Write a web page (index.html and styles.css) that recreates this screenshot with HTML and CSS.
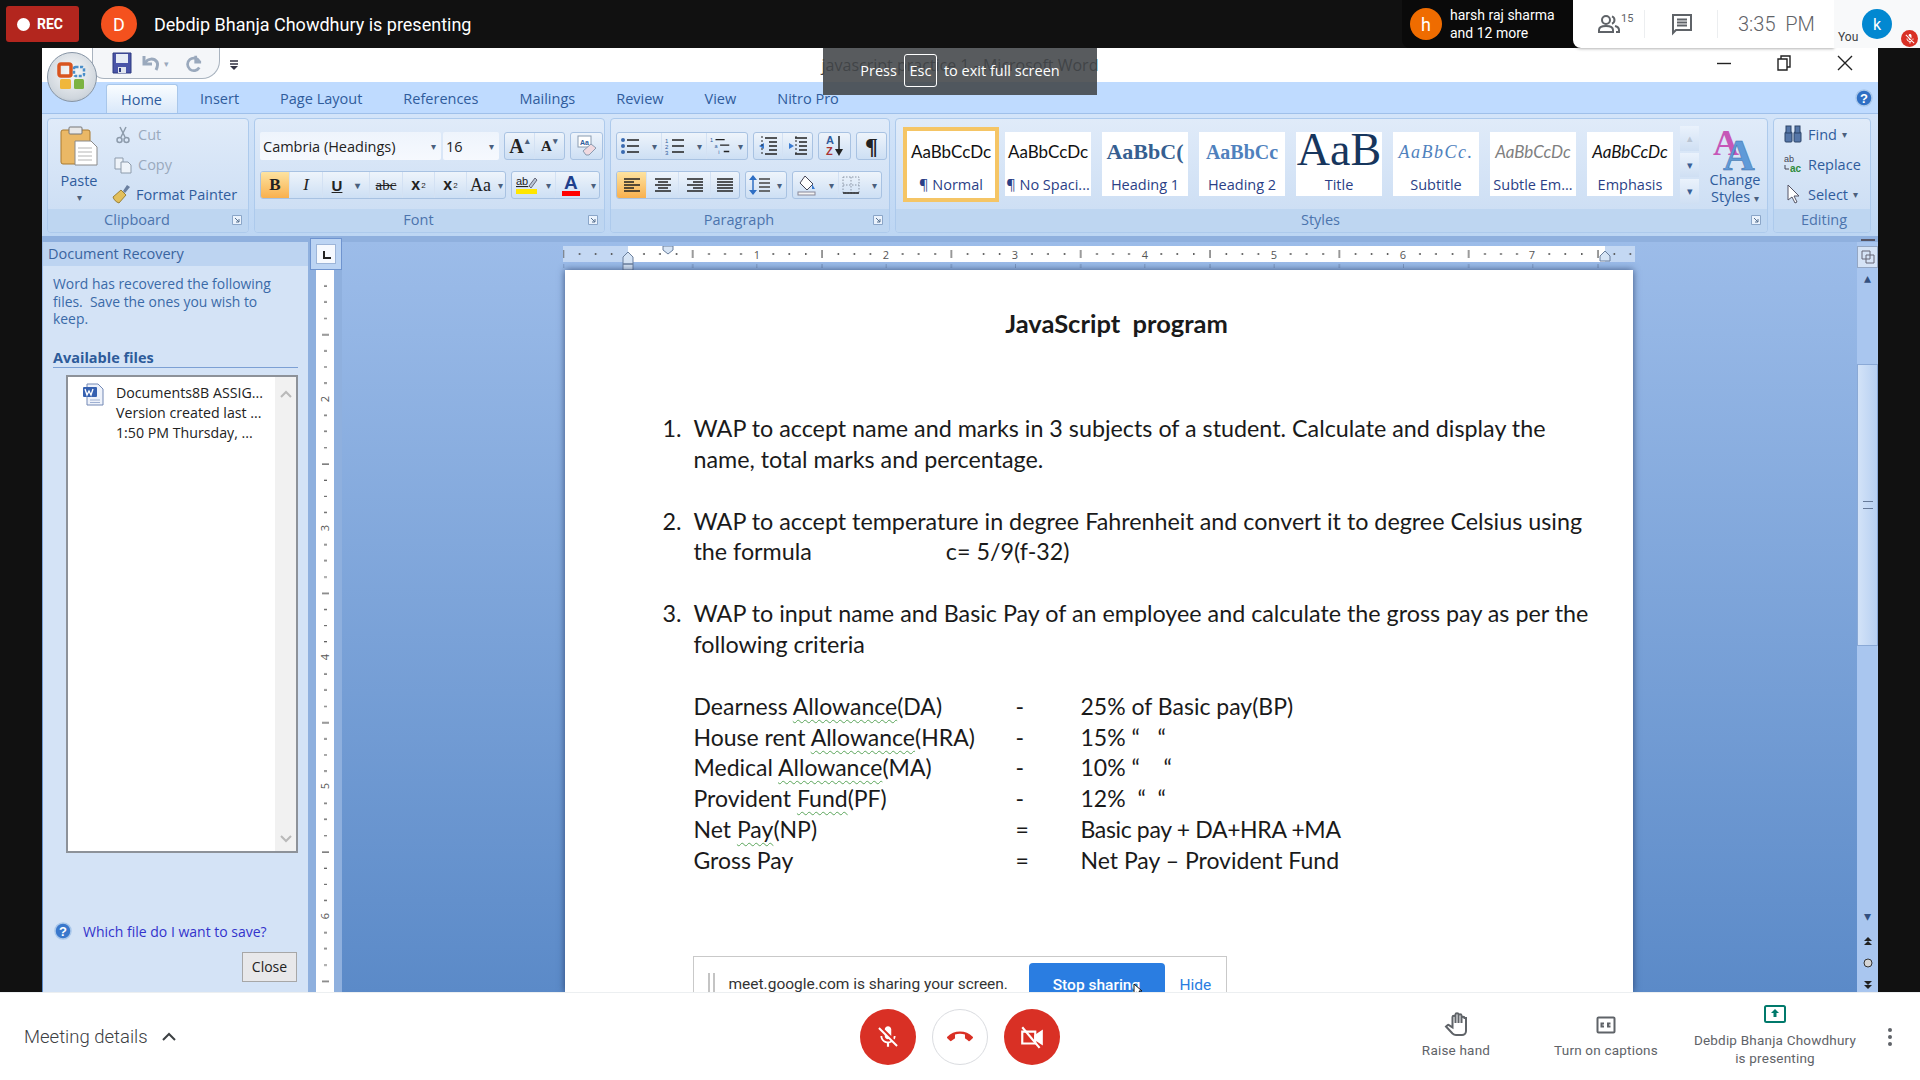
FILE: index.html
```html
<!DOCTYPE html>
<html lang="en">
<head>
    <meta charset="UTF-8">
    <title>Meet - Debdip Bhanja Chowdhury is presenting</title>
    <link rel="stylesheet" href="styles.css">
</head>
<body>
    <svg class="defs" width="0" height="0">
        <symbol id="i-launcher" viewBox="0 0 10 10"><path d="M.5.5h9v9h-9z" fill="#eaf2fc" stroke="#8ba6c8"/><path d="M3 3l4 4M7 4v3H4" fill="none" stroke="#56708f"/></symbol>
        <symbol id="i-left" viewBox="0 0 18 16"><path d="M1 2h16M1 5h10M1 8h16M1 11h10M1 14h16" stroke="#222" stroke-width="1.3"/></symbol>
        <symbol id="i-center" viewBox="0 0 18 16"><path d="M1 2h16M4 5h10M1 8h16M4 11h10M1 14h16" stroke="#222" stroke-width="1.3"/></symbol>
        <symbol id="i-right" viewBox="0 0 18 16"><path d="M1 2h16M7 5h10M1 8h16M7 11h10M1 14h16" stroke="#222" stroke-width="1.3"/></symbol>
        <symbol id="i-justify" viewBox="0 0 18 16"><path d="M1 2h16M1 5h16M1 8h16M1 11h16M1 14h16" stroke="#222" stroke-width="1.3"/></symbol>
    </svg>

    <header class="topbar">
        <div class="rec"><span class="rec-dot"></span>REC</div>
        <div class="avatar avatar-d">D</div>
        <div class="presenter">Debdip Bhanja Chowdhury is presenting</div>
        <div class="spacer"></div>
        <div class="people-chip">
            <div class="avatar avatar-h">h</div>
            <div class="people-names">harsh raj sharma<br>and 12 more</div>
        </div>
        <div class="meet-panel">
            <div class="panel-cell panel-people">
                <svg width="24" height="24" viewBox="0 0 24 24" fill="none" stroke="#5f6368" stroke-width="2"><circle cx="9" cy="8" r="4"/><path d="M2 20v-2c0-3 4-4 7-4s7 1 7 4v2z"/><path d="M15 4.3a4 4 0 0 1 0 7.4M18 14c2 .5 4 1.6 4 4v2h-3"/></svg>
                <sup class="people-count">15</sup>
            </div>
            <div class="panel-cell panel-chat">
                <svg width="22" height="24" viewBox="0 0 22 24" fill="none" stroke="#5f6368" stroke-width="2"><path d="M2 3h18v15H5l-3 3z"/><path d="M6 7.5h10M6 10.5h10M6 13.5h10"/></svg>
            </div>
            <div class="panel-time">3:35&nbsp; PM</div>
        </div>
        <div class="self-tile">
            <span class="self-you">You</span>
            <div class="avatar avatar-k">k</div>
            <span class="self-mic">
                <svg width="12" height="12" viewBox="0 0 24 24" fill="#fff"><path d="M19 11h-1.7c0 .74-.16 1.43-.43 2.05l1.23 1.23c.56-.98.9-2.09.9-3.28zM15 11.17V5c0-1.66-1.34-3-3-3S9 3.34 9 5v.18zM4.27 3L3 4.27l6 6V11c0 1.66 1.33 3 3 3 .22 0 .44-.03.65-.08l1.66 1.66c-.71.33-1.5.52-2.31.52-2.76 0-5.3-2.1-5.3-5.1H5c0 3.41 2.72 6.23 6 6.72V21h2v-3.28c.91-.13 1.77-.45 2.54-.9L19.73 21 21 19.73z"/></svg>
            </span>
        </div>
    </header>

    <main class="word">
        <!-- office button sits over title bar and tabs -->
        <div class="orb">
            <svg width="30" height="30" viewBox="0 0 30 30">
                <rect x="2" y="2" width="12" height="12" rx="2" fill="none" stroke="#d9541e" stroke-width="3.5"/>
                <rect x="17" y="5" width="10" height="9" rx="1.5" fill="none" stroke="#4a8ec9" stroke-width="2.5" stroke-dasharray="3 1.5"/>
                <rect x="3" y="17" width="11" height="10" rx="1.5" fill="#f0b73c"/>
                <rect x="17" y="17" width="10" height="10" rx="1.5" fill="#7cb342"/>
            </svg>
        </div>

        <div class="titlebar">
            <div class="qat">
                <div class="qat-pill">
                    <svg width="20" height="22" viewBox="0 0 20 22"><path d="M1 1h18v20H1z" fill="#4a55a8" stroke="#2c3a80"/><path d="M4 2h12v9H4z" fill="#e6ecf6"/><path d="M6 15h8v6H6z" fill="#dfe4ee"/><path d="M7 16h2v4H7z" fill="#2c3a80"/></svg>
                    <svg width="20" height="20" viewBox="0 0 20 20" fill="none" stroke="#9aa9bd" stroke-width="3"><path d="M3 3v8h8"/><path d="M4 10c3-5 9-5 12-1 1 2 1 4-1 8"/></svg>
                    <span class="qat-drop">&#9662;</span>
                    <svg class="qat-redo" width="18" height="20" viewBox="0 0 20 20" fill="none" stroke="#9aa9bd" stroke-width="3"><path d="M13 2v7h6"/><path d="M17 8a7 7 0 1 0 0 7"/></svg>
                </div>
                <svg class="qat-more" width="8" height="12" viewBox="0 0 8 12"><path d="M0 2h8M0 5h8" stroke="#334" stroke-width="1.4"/><path d="M0 7h8l-4 4z" fill="#334"/></svg>
            </div>
            <div class="doc-title">javascript practice 1 - Microsoft Word</div>
            <div class="win-controls">
                <svg width="14" height="14" viewBox="0 0 14 14"><path d="M0 7.5h14" stroke="#222" stroke-width="1.4"/></svg>
                <svg width="14" height="16" viewBox="0 0 14 16" fill="none" stroke="#222" stroke-width="1.4"><path d="M1 4h9v11H1z"/><path d="M4 4V1h9v11h-3"/></svg>
                <svg width="16" height="16" viewBox="0 0 16 16"><path d="M1 1l14 14M15 1L1 15" stroke="#222" stroke-width="1.4"/></svg>
            </div>
        </div>

        <nav class="tabs">
            <div class="tab tab-active">Home</div>
            <div class="tab">Insert</div>
            <div class="tab">Page Layout</div>
            <div class="tab">References</div>
            <div class="tab">Mailings</div>
            <div class="tab">Review</div>
            <div class="tab">View</div>
            <div class="tab">Nitro Pro</div>
            <div class="spacer"></div>
            <svg class="help-icon" width="18" height="18" viewBox="0 0 18 18"><circle cx="9" cy="9" r="8" fill="#2f6fc4" stroke="#a9c7ea" stroke-width="1.5"/><text x="9" y="13.5" text-anchor="middle" class="help-q">?</text></svg>
        </nav>

        <section class="ribbon">
            <div class="group group-clipboard">
                <div class="group-body clipboard-body">
                    <div class="paste">
                        <svg width="38" height="40" viewBox="0 0 38 40"><rect x="1" y="4" width="29" height="34" rx="2" fill="#eab866" stroke="#a97a30"/><rect x="9" y="1" width="13" height="7" rx="1" fill="#e8e8e8" stroke="#777"/><path d="M15 15h16l6 6v18H15z" fill="#fff" stroke="#8a8a8a"/><path d="M18 22h14M18 26h14M18 30h14M18 34h14" stroke="#b5b5b5"/></svg>
                        <span class="paste-label">Paste</span>
                        <span class="drop">&#9662;</span>
                    </div>
                    <div class="clip-list">
                        <div class="clip-item is-off">
                            <svg width="20" height="20" viewBox="0 0 20 20" fill="none" stroke="#8d9bab" stroke-width="1.5"><path d="M7 2l5 10M13 2L8 12"/><circle cx="6.5" cy="15" r="2.5"/><circle cx="13.5" cy="15" r="2.5"/></svg>
                            Cut
                        </div>
                        <div class="clip-item is-off">
                            <svg width="20" height="20" viewBox="0 0 20 20" fill="#eef3f9" stroke="#8d9bab"><path d="M2 3h8v11H2z"/><path d="M8 7h7l3 3v8H8z"/></svg>
                            Copy
                        </div>
                        <div class="clip-item">
                            <svg width="20" height="20" viewBox="0 0 20 20"><path d="M12 7l4-6 3 2-5 6z" fill="#6a7fa0"/><path d="M2 13l8-7 5 5-7 8c-3-1-5-3-6-6z" fill="#e2bf5b" stroke="#8a6d1e" stroke-width=".8"/></svg>
                            Format Painter
                        </div>
                    </div>
                </div>
                <div class="group-label">Clipboard<svg class="launcher" width="10" height="10"><use href="#i-launcher"/></svg></div>
            </div>

            <div class="group group-font">
                <div class="group-body font-body">
                    <div class="tool-row">
                        <div class="combo combo-font"><span>Cambria (Headings)</span><span class="drop">&#9662;</span></div>
                        <div class="combo combo-size"><span>16</span><span class="drop">&#9662;</span></div>
                        <div class="btn-group grow-group">
                            <div class="btn w-30 glyph-a-big">A<sup>&#9652;</sup></div>
                            <div class="btn w-29 glyph-a-small">A<sup>&#9662;</sup></div>
                        </div>
                        <div class="btn-group clear-group">
                            <div class="btn w-31">
                                <svg width="22" height="22" viewBox="0 0 22 22"><rect x="2" y="1" width="13" height="11" fill="#fff" stroke="#8a9bb0"/><text x="8.5" y="9.5" text-anchor="middle" class="clear-aa">Aa</text><path d="M7 16l8-7 5 4-7 7H10z" fill="#f0d9e0" stroke="#8a9bb0"/></svg>
                            </div>
                        </div>
                    </div>
                    <div class="tool-row">
                        <div class="btn-group format-group">
                            <div class="btn is-on w-29 glyph-b">B</div>
                            <div class="btn w-33 glyph-i">I</div>
                            <div class="btn w-47 glyph-u"><u>U</u><span class="drop drop-gap">&#9662;</span></div>
                            <div class="btn w-33 glyph-s"><s>abc</s></div>
                            <div class="btn w-32 glyph-x">x<sub>2</sub></div>
                            <div class="btn w-32 glyph-x">x<sup>2</sup></div>
                            <div class="btn w-40 split glyph-aa">Aa<span class="drop">&#9662;</span></div>
                        </div>
                        <div class="btn-group color-group">
                            <div class="btn w-44 split">
                                <svg width="24" height="22" viewBox="0 0 24 22"><text x="1" y="11" class="mark-ab">ab</text><path d="M14 12l6-8 2 2-6 8z" fill="#b9c6d8" stroke="#667"/><rect x="1" y="15" width="21" height="5" fill="#ffe600"/></svg>
                                <span class="drop">&#9662;</span>
                            </div>
                            <div class="btn w-44 split font-color"><span class="font-color-a">A</span><span class="drop">&#9662;</span></div>
                        </div>
                    </div>
                </div>
                <div class="group-label">Font<svg class="launcher" width="10" height="10"><use href="#i-launcher"/></svg></div>
            </div>

            <div class="group group-para">
                <div class="group-body para-body">
                    <div class="tool-row">
                        <div class="btn-group">
                            <div class="btn w-45 split">
                                <svg width="20" height="18" viewBox="0 0 20 18"><path d="M7 3h12M7 9h12M7 15h12" stroke="#222" stroke-width="1.5"/><circle cx="3" cy="3" r="2" fill="#3a6ab0"/><circle cx="3" cy="9" r="2" fill="#3a6ab0"/><circle cx="3" cy="15" r="2" fill="#3a6ab0"/></svg><span class="drop">&#9662;</span>
                            </div>
                            <div class="btn w-45 split">
                                <svg width="20" height="18" viewBox="0 0 20 18"><path d="M7 3h12M7 9h12M7 15h12" stroke="#222" stroke-width="1.5"/><text x="0" y="6" class="mini-num">1</text><text x="0" y="12" class="mini-num">2</text><text x="0" y="18" class="mini-num">3</text></svg><span class="drop">&#9662;</span>
                            </div>
                            <div class="btn w-40 split">
                                <svg width="22" height="20" viewBox="0 0 24 20"><path d="M6 3h10M11 9h10M15 16h6" stroke="#222" stroke-width="1.5"/><text x="0" y="6" class="mini-num">1</text><text x="5" y="12" class="mini-num">a</text><text x="9" y="19" class="mini-num">i</text></svg><span class="drop">&#9662;</span>
                            </div>
                        </div>
                        <div class="btn-group">
                            <div class="btn w-29"><svg width="22" height="20" viewBox="0 0 22 20"><path d="M8 2h12M12 6h8M12 10h8M12 14h8M8 18h12" stroke="#222" stroke-width="1.5"/><path d="M7 7L2 10l5 3z" fill="#3a7bd0"/><path d="M5 0v20" stroke="#222" stroke-dasharray="2 2"/></svg></div>
                            <div class="btn w-29"><svg width="22" height="20" viewBox="0 0 22 20"><path d="M8 2h12M12 6h8M12 10h8M12 14h8M8 18h12" stroke="#222" stroke-width="1.5"/><path d="M2 7l5 3-5 3z" fill="#3a7bd0"/><path d="M9 0v20" stroke="#222" stroke-dasharray="2 2"/></svg></div>
                        </div>
                        <div class="btn-group">
                            <div class="btn w-29 sort-btn">
                                <span class="sort-az"><b class="sort-a">A</b><b class="sort-z">Z</b></span>
                                <svg width="8" height="20" viewBox="0 0 8 20"><path d="M4 0v15" stroke="#222" stroke-width="1.5"/><path d="M0 13h8l-4 7z" fill="#222"/></svg>
                            </div>
                        </div>
                        <div class="btn-group">
                            <div class="btn w-29 pilcrow">&para;</div>
                        </div>
                    </div>
                    <div class="tool-row">
                        <div class="btn-group">
                            <div class="btn is-on w-30"><svg width="18" height="16"><use href="#i-left"/></svg></div>
                            <div class="btn w-32"><svg width="18" height="16"><use href="#i-center"/></svg></div>
                            <div class="btn w-32"><svg width="18" height="16"><use href="#i-right"/></svg></div>
                            <div class="btn w-28"><svg width="18" height="16"><use href="#i-justify"/></svg></div>
                        </div>
                        <div class="btn-group">
                            <div class="btn w-40 split">
                                <svg width="22" height="20" viewBox="0 0 22 20"><path d="M10 4h11M10 8h11M10 12h11M10 16h11" stroke="#444" stroke-width="1.4"/><path d="M4 4v12" stroke="#2f6fc4" stroke-width="1.5"/><path d="M0 5l4-5 4 5zM0 15l4 5 4-5z" fill="#2f6fc4"/></svg><span class="drop">&#9662;</span>
                            </div>
                        </div>
                        <div class="btn-group">
                            <div class="btn w-46 split">
                                <svg width="22" height="22" viewBox="0 0 22 22"><path d="M9 2l8 8-6 6-7-7z" fill="#fff" stroke="#445"/><path d="M16 10l3 5-3 0z" fill="#3a7bd0"/><rect x="2" y="18" width="17" height="3" fill="#f4f4f4" stroke="#889"/></svg><span class="drop">&#9662;</span>
                            </div>
                            <div class="btn w-42 split">
                                <svg width="18" height="18" viewBox="0 0 18 18"><path d="M1 1h16v16H1zM9 1v16M1 9h16" fill="none" stroke="#8a95a5" stroke-dasharray="1.5 1.5"/><path d="M1 17h16" stroke="#222" stroke-width="1.5"/></svg><span class="drop">&#9662;</span>
                            </div>
                        </div>
                    </div>
                </div>
                <div class="group-label">Paragraph<svg class="launcher" width="10" height="10"><use href="#i-launcher"/></svg></div>
            </div>

            <div class="group group-styles">
                <div class="group-body styles-body">
                    <div class="gallery">
                        <div class="style-tile tile-selected"><div class="sample">AaBbCcDc</div><div class="tile-name">&para; Normal</div></div>
                        <div class="style-tile"><div class="sample">AaBbCcDc</div><div class="tile-name">&para; No Spaci...</div></div>
                        <div class="style-tile"><div class="sample sample-h1">AaBbC(</div><div class="tile-name">Heading 1</div></div>
                        <div class="style-tile"><div class="sample sample-h2">AaBbCc</div><div class="tile-name">Heading 2</div></div>
                        <div class="style-tile"><div class="sample sample-title">AaB</div><div class="tile-name">Title</div></div>
                        <div class="style-tile"><div class="sample sample-sub">AaBbCc.</div><div class="tile-name">Subtitle</div></div>
                        <div class="style-tile"><div class="sample sample-subtle">AaBbCcDc</div><div class="tile-name">Subtle Em...</div></div>
                        <div class="style-tile"><div class="sample sample-em">AaBbCcDc</div><div class="tile-name">Emphasis</div></div>
                    </div>
                    <div class="gallery-scroll">
                        <div class="gallery-arrow arrow-off">&#9652;</div>
                        <div class="gallery-arrow">&#9662;</div>
                        <div class="gallery-arrow">&#9662;</div>
                    </div>
                    <div class="change-styles">
                        <svg width="46" height="45" viewBox="0 0 46 45"><text x="1" y="29" class="cs-pink">A</text><text x="11" y="44" class="cs-blue">A</text></svg>
                        <span>Change</span>
                        <span>Styles <i class="drop">&#9662;</i></span>
                    </div>
                </div>
                <div class="group-label">Styles<svg class="launcher" width="10" height="10"><use href="#i-launcher"/></svg></div>
            </div>

            <div class="group group-edit">
                <div class="group-body edit-body">
                    <div class="edit-item">
                        <svg width="20" height="20" viewBox="0 0 20 20" fill="#5576a8" stroke="#2d4468"><rect x="2" y="8" width="7" height="10" rx="1"/><rect x="11" y="8" width="7" height="10" rx="1"/><rect x="3" y="2" width="5" height="7"/><rect x="12" y="2" width="5" height="7"/></svg>
                        Find <i class="drop">&#9662;</i>
                    </div>
                    <div class="edit-item">
                        <svg width="20" height="20" viewBox="0 0 20 20"><text x="1" y="8" class="rep-ab">ab</text><text x="7" y="18" class="rep-ac">ac</text><path d="M2 11v4h4" fill="none" stroke="#445"/></svg>
                        Replace
                    </div>
                    <div class="edit-item">
                        <svg width="20" height="20" viewBox="0 0 20 20"><path d="M5 1v15l4-3 3 6 2-1-3-6h5z" fill="#fff" stroke="#556"/></svg>
                        Select <i class="drop">&#9662;</i>
                    </div>
                </div>
                <div class="group-label label-edit">Editing</div>
            </div>
        </section>

        <section class="workspace">
            <aside class="recovery">
                <div class="recovery-head">Document Recovery</div>
                <div class="recovery-body">
                    <p class="recovery-text">Word has recovered the following<br>files.&nbsp; Save the ones you wish to<br>keep.</p>
                    <div class="recovery-sub">Available files</div>
                    <div class="file-list">
                        <div class="file-item">
                            <svg width="22" height="23" viewBox="0 0 22 23"><path d="M5 1h11l5 5v16H5z" fill="#eef2fa" stroke="#7288b5"/><rect x="1" y="4" width="14" height="10" rx="1" fill="#3560b0"/><path d="M3 6l2 6 2-4 2 4 2-6" fill="none" stroke="#fff" stroke-width="1.3"/><path d="M8 17h10M8 19.5h10" stroke="#9fb0d2"/></svg>
                            <div class="file-lines">
                                <div>Documents8B ASSIG...</div>
                                <div>Version created last ...</div>
                                <div>1:50 PM Thursday, ...</div>
                            </div>
                        </div>
                        <div class="file-scroll">
                            <svg width="12" height="8" viewBox="0 0 12 8" fill="none" stroke="#b9b9b9" stroke-width="2"><path d="M1 7l5-5 5 5"/></svg>
                            <svg width="12" height="8" viewBox="0 0 12 8" fill="none" stroke="#b9b9b9" stroke-width="2"><path d="M1 1l5 5 5-5"/></svg>
                        </div>
                    </div>
                    <div class="recovery-help">
                        <svg width="18" height="18" viewBox="0 0 18 18"><circle cx="9" cy="9" r="8" fill="#3a78cc" stroke="#a9c7ea" stroke-width="1.5"/><text x="9" y="13.5" text-anchor="middle" class="help-q">?</text></svg>
                        <span>Which file do I want to save?</span>
                    </div>
                    <div class="recovery-close"><div class="close-btn">Close</div></div>
                </div>
            </aside>

            <div class="vruler">
                <div class="vruler-corner"><span class="tab-stop"></span></div>
                <svg class="vruler-strip" width="18" height="722" viewBox="0 0 18 722">
                    <defs>
                        <pattern id="vticks" width="18" height="129.33" patternUnits="userSpaceOnUse">
                            <path d="M8 16h3M8 32h3M8 48.5h3M6 64.7h7M8 81h3M8 97h3M8 113h3" stroke="#555" stroke-width="1.2"/>
                        </pattern>
                    </defs>
                    <rect width="18" height="722" fill="#fff"/>
                    <rect width="18" height="722" fill="url(#vticks)"/>
                    <text transform="translate(13,129) rotate(-90)" text-anchor="middle" class="ruler-num">2</text>
                    <text transform="translate(13,258) rotate(-90)" text-anchor="middle" class="ruler-num">3</text>
                    <text transform="translate(13,387) rotate(-90)" text-anchor="middle" class="ruler-num">4</text>
                    <text transform="translate(13,516) rotate(-90)" text-anchor="middle" class="ruler-num">5</text>
                    <text transform="translate(13,646) rotate(-90)" text-anchor="middle" class="ruler-num">6</text>
                </svg>
            </div>

            <div class="doc-area">
                <svg class="hruler" width="1072" height="24" viewBox="0 0 1072 24">
                    <defs>
                        <pattern id="hticks" x="65" width="129.33" height="24" patternUnits="userSpaceOnUse">
                            <path d="M16 7v2M32 7v2M48.5 7v2M81 7v2M97 7v2M113 7v2" stroke="#555" stroke-width="1.5"/>
                            <path d="M64.7 4v8" stroke="#555" stroke-width="1.2"/>
                            <path d="M64.7 18v4M129 18v4" stroke="#7a95bd" stroke-width="1.2"/>
                        </pattern>
                    </defs>
                    <rect width="1072" height="16" fill="#c4d8f3"/>
                    <rect x="65" width="977" height="16" fill="#fff"/>
                    <rect width="1072" height="24" fill="url(#hticks)"/>
                    <text x="194" y="13" text-anchor="middle" class="ruler-num">1</text>
                    <text x="323" y="13" text-anchor="middle" class="ruler-num">2</text>
                    <text x="452" y="13" text-anchor="middle" class="ruler-num">3</text>
                    <text x="582" y="13" text-anchor="middle" class="ruler-num">4</text>
                    <text x="711" y="13" text-anchor="middle" class="ruler-num">5</text>
                    <text x="840" y="13" text-anchor="middle" class="ruler-num">6</text>
                    <text x="969" y="13" text-anchor="middle" class="ruler-num">7</text>
                    <path d="M100 0h10v4l-5 4-5-4z" fill="#d6e4f5" stroke="#6a7f9c"/>
                    <path d="M60 18v-7l5-5 5 5v7zM60 18h10v6H60z" fill="#d6e4f5" stroke="#6a7f9c"/>
                    <path d="M1037 15v-5l5-5 5 5v5z" fill="#d6e4f5" stroke="#6a7f9c"/>
                </svg>

                <article class="page">
                    <h1 class="doc-heading">JavaScript&nbsp; program</h1>
                    <ol class="doc-list">
                        <li>WAP to accept name and marks in 3 subjects of a student. Calculate and display the name, total marks and percentage.</li>
                        <li>WAP to accept temperature in degree Fahrenheit and convert it to degree Celsius using the formula<span class="formula-gap"></span>c= 5/9(f-32)</li>
                        <li>WAP to input name and Basic Pay of an employee and calculate the gross pay as per the following criteria</li>
                    </ol>
                    <div class="pay-table">
                        <div>Dearness <span class="squiggle">Allowance</span>(DA)</div><div>-</div><div>25% of Basic pay(BP)</div>
                        <div>House rent <span class="squiggle">Allowance</span>(HRA)</div><div>-</div><div>15% &#8220;&nbsp; &nbsp;&#8220;</div>
                        <div>Medical <span class="squiggle">Allowance</span>(MA)</div><div>-</div><div>10% &#8220;&nbsp; &nbsp; &#8220;</div>
                        <div>Provident <span class="squiggle">Fund</span>(PF)</div><div>-</div><div>12%&nbsp; &#8220;&nbsp; &#8220;</div>
                        <div>Net <span class="squiggle">Pay</span>(NP)</div><div>=</div><div class="tight">Basic pay + DA+HRA +MA</div>
                        <div>Gross Pay</div><div>=</div><div>Net Pay &ndash; Provident Fund</div>
                    </div>

                    <!-- chrome share notice floats over the page -->
                    <div class="share-bar">
                        <span class="share-grip"></span>
                        <span class="share-text">meet.google.com is sharing your screen.</span>
                        <span class="share-stop">Stop sharing</span>
                        <span class="share-hide">Hide</span>
                        <svg class="share-cursor" width="10" height="14" viewBox="0 0 10 14"><path d="M1 1v10l3-2 2 4 2-1-2-4h3z" fill="#fff" stroke="#111"/></svg>
                    </div>
                </article>
            </div>

            <div class="vscroll">
                <div class="scroll-split"></div>
                <div class="scroll-view">
                    <svg width="16" height="16" viewBox="0 0 16 16" fill="none" stroke="#667"><path d="M2 2h8v8H2zM6 6h8v8H6z"/></svg>
                </div>
                <div class="scroll-arrow">&#9652;</div>
                <div class="scroll-track"><div class="scroll-thumb"><span class="thumb-grip"></span></div></div>
                <div class="scroll-arrow">&#9662;</div>
                <div class="scroll-nav">
                    <svg width="10" height="10" viewBox="0 0 10 10"><path d="M1 5l4-4 4 4zM1 9l4-4 4 4z" fill="#222"/></svg>
                    <svg width="10" height="10" viewBox="0 0 10 10"><circle cx="5" cy="5" r="4" fill="#d5d5d5" stroke="#333"/></svg>
                    <svg width="10" height="10" viewBox="0 0 10 10"><path d="M1 1l4 4 4-4zM1 5l4 4 4-4z" fill="#222"/></svg>
                </div>
            </div>
        </section>

        <div class="esc-toast">Press <span class="esc-key">Esc</span> to exit full screen</div>
    </main>

    <footer class="callbar">
        <div class="call-left">
            <span>Meeting details</span>
            <svg width="16" height="10" viewBox="0 0 16 10" fill="none" stroke="#3c4043" stroke-width="2"><path d="M2 8l6-6 6 6"/></svg>
        </div>
        <div class="call-center">
            <div class="round round-red">
                <svg width="26" height="26" viewBox="0 0 24 24" fill="#fff"><path d="M19 11h-1.7c0 .74-.16 1.43-.43 2.05l1.23 1.23c.56-.98.9-2.09.9-3.28zM15 11.17V5c0-1.66-1.34-3-3-3S9 3.34 9 5v.18zM4.27 3L3 4.27l6 6V11c0 1.66 1.33 3 3 3 .22 0 .44-.03.65-.08l1.66 1.66c-.71.33-1.5.52-2.31.52-2.76 0-5.3-2.1-5.3-5.1H5c0 3.41 2.72 6.23 6 6.72V21h2v-3.28c.91-.13 1.77-.45 2.54-.9L19.73 21 21 19.73z"/></svg>
            </div>
            <div class="round round-white">
                <svg width="26" height="26" viewBox="0 0 24 24" fill="#d93025"><path d="M12 9c-1.6 0-3.15.25-4.6.72v3.1c0 .39-.23.74-.56.9-.98.49-1.87 1.12-2.66 1.85-.18.18-.43.28-.7.28-.28 0-.53-.11-.71-.29L.29 13.08c-.18-.17-.29-.42-.29-.7 0-.28.11-.53.29-.71C3.34 8.78 7.46 7 12 7s8.66 1.78 11.71 4.67c.18.18.29.43.29.71 0 .28-.11.53-.29.71l-2.48 2.48c-.18.18-.43.29-.71.29-.27 0-.52-.11-.7-.28-.79-.74-1.69-1.36-2.67-1.85-.33-.16-.56-.5-.56-.9v-3.1C15.15 9.25 13.6 9 12 9z"/></svg>
            </div>
            <div class="round round-red">
                <svg width="26" height="26" viewBox="0 0 24 24" fill="none" stroke="#fff" stroke-width="2"><path d="M15 7H3v11h12z"/><path d="M15 11l6-4v11l-6-4z" fill="#fff"/><path d="M3 3l16 19"/></svg>
            </div>
        </div>
        <div class="call-right">
            <div class="call-action action-raise">
                <svg width="24" height="24" viewBox="0 0 24 24" fill="none" stroke="#5f6368" stroke-width="2"><path d="M22 6v13c0 2.5-2 4-4 4h-6c-1.5 0-2.5-.5-3.5-1.5L2 14.5l1.5-1.3c.5-.4 1-.4 1.5 0l3.5 2.3V5c0-1.8 3-1.8 3 0v6-8.500c0-1.8 3-1.8 3 0V11 3.500c0-1.8 3-1.8 3 0V11 6c0-1.8 3-1.8 3 0z"/></svg>
                <span>Raise hand</span>
            </div>
            <div class="call-action action-captions">
                <svg width="20" height="20" viewBox="0 0 20 20" fill="none" stroke="#5f6368" stroke-width="2"><rect x="1.5" y="2.5" width="17" height="15" rx="1"/><path d="M8 8.5H5.5v3H8M14.5 8.5H12v3h2.5"/></svg>
                <span>Turn on captions</span>
            </div>
            <div class="call-action action-present">
                <svg width="22" height="18" viewBox="0 0 22 18"><rect x="1" y="1" width="20" height="16" rx="1.5" fill="none" stroke="#00796b" stroke-width="2"/><path d="M11 4l4 4h-2.5v4h-3V8H7z" fill="#00796b"/></svg>
                <span>Debdip Bhanja Chowdhury is presenting</span>
            </div>
            <div class="call-more"><i></i><i></i><i></i></div>
        </div>
    </footer>
</body>
</html>
```

FILE: styles.css
```css
/* Page shell */
* {
    box-sizing: border-box;
}
body {
    margin: 0;
    width: 1920px;
    height: 1080px;
    overflow: hidden;
    display: flex;
    flex-direction: column;
    background: #111;
    font-family: Roboto, "Liberation Sans", sans-serif;
}
.defs {
    position: absolute;
}
.spacer {
    flex: 1;
}

/* Meet top bar */
.topbar {
    height: 48px;
    display: flex;
    align-items: center;
    background: #111;
    color: #fff;
    padding-left: 6px;
    flex: none;
    position: relative;
    z-index: 3;
}
.rec {
    width: 73px;
    height: 36px;
    background: #b3261e;
    border-radius: 3px;
    display: flex;
    align-items: center;
    padding-left: 11px;
    gap: 7px;
    font-size: 14px;
    font-weight: 700;
}
.rec-dot {
    width: 13px;
    height: 13px;
    border-radius: 50%;
    background: #fff;
}
.avatar {
    border-radius: 50%;
    display: flex;
    align-items: center;
    justify-content: center;
    color: #fff;
}
.avatar-d {
    width: 36px;
    height: 36px;
    margin-left: 22px;
    background: #f4511e;
    font-size: 18px;
}
.presenter {
    margin-left: 17px;
    font-size: 18px;
}
.people-chip {
    width: 172px;
    height: 48px;
    background: #0a0a0a;
    border-bottom-left-radius: 8px;
    display: flex;
    align-items: center;
    padding-left: 8px;
    gap: 8px;
}
.avatar-h {
    width: 32px;
    height: 32px;
    background: #ef6c00;
    font-size: 18px;
}
.people-names {
    font-size: 14px;
    line-height: 18px;
    white-space: nowrap;
}
.meet-panel {
    width: 261px;
    height: 48px;
    background: #fff;
    border-bottom-left-radius: 8px;
    margin-left: -1px;
    display: flex;
    align-items: center;
    color: #5f6368;
    box-shadow: 0 1px 3px rgba(0, 0, 0, 0.3);
}
.panel-cell {
    height: 28px;
    display: flex;
    align-items: center;
    border-right: 1px solid #eceef0;
}
.panel-people {
    width: 72px;
    padding-left: 24px;
}
.people-count {
    font-size: 11px;
    margin: -12px 0 0 0;
}
.panel-chat {
    width: 73px;
    padding-left: 26px;
}
.panel-time {
    margin-left: 20px;
    font-size: 20px;
    font-weight: 300;
    white-space: nowrap;
}
.self-tile {
    width: 86px;
    height: 48px;
    background: #f8f9fa;
    position: relative;
    color: #3c4043;
}
.self-you {
    position: absolute;
    left: 4px;
    top: 30px;
    font-size: 12px;
}
.avatar-k {
    position: absolute;
    left: 28px;
    top: 9px;
    width: 30px;
    height: 30px;
    background: #0288d1;
    font-size: 16px;
}
.self-mic {
    position: absolute;
    left: 67px;
    top: 30px;
    width: 17px;
    height: 17px;
    background: #d93025;
    border-radius: 50%;
    display: flex;
    align-items: center;
    justify-content: center;
}

/* Word window */
.word {
    flex: 1;
    min-height: 0;
    margin: 0 42px;
    display: flex;
    flex-direction: column;
    overflow: hidden;
    position: relative;
    background: #bfdbff;
    font-family: "Open Sans", "Liberation Sans", sans-serif;
    color: #3a64a0;
}
.orb {
    position: absolute;
    left: 5px;
    top: 4px;
    width: 50px;
    height: 50px;
    border-radius: 50%;
    background: radial-gradient(circle at 50% 40%, #fafafa, #cfd6dd 70%, #98a4b1);
    border: 1px solid #8795a5;
    display: flex;
    align-items: center;
    justify-content: center;
    z-index: 2;
}
.titlebar {
    height: 34px;
    flex: none;
    background: #fff;
    display: grid;
    grid-template-columns: 1fr auto 1fr;
    align-items: center;
}
.qat {
    display: flex;
    align-items: center;
    padding-left: 50px;
}
.qat-pill {
    width: 128px;
    height: 31px;
    margin-top: -3px;
    border: 1px solid #a9b3bf;
    border-top: 0;
    border-radius: 0 0 18px 12px;
    display: flex;
    align-items: center;
    padding-left: 19px;
    background: #f4f6f9;
}
.qat-pill svg:nth-child(2) {
    margin-left: 9px;
}
.qat-drop {
    font-size: 9px;
    color: #9aa9bd;
    margin: 0 15px 0 3px;
}
.qat-more {
    margin-left: 10px;
}
.doc-title {
    font-size: 16px;
    color: #444;
}
.win-controls {
    display: flex;
    justify-content: flex-end;
    align-items: center;
    gap: 46px;
    padding-right: 25px;
    margin-top: -4px;
}

/* Tabs */
.tabs {
    height: 31px;
    flex: none;
    display: flex;
    align-items: flex-end;
    padding-left: 64px;
    background: #bfdbff;
    font-size: 14.5px;
    color: #2f5c9c;
}
.tab {
    padding: 0 20px;
    height: 29px;
    line-height: 30px;
    margin-right: 1px;
}
.tab-active {
    padding: 0 14px;
    width: 72px;
    background: linear-gradient(#fafdff, #d9e8fa);
    border: 1px solid #a9c7ea;
    border-bottom: 0;
    border-radius: 3px 3px 0 0;
    margin-right: 2px;
}
.help-icon {
    align-self: center;
    margin-right: 5px;
}
.help-q {
    fill: #fff;
    font: 700 13px "Liberation Sans", sans-serif;
}

/* Ribbon */
.ribbon {
    height: 123px;
    flex: none;
    display: flex;
    gap: 5px;
    padding: 4px 5px 3px;
    background: linear-gradient(#d3e4f9, #bdd6f3);
    border-top: 1px solid #9fc0ea;
}
.group {
    display: flex;
    flex-direction: column;
    border: 1px solid #adcaec;
    border-radius: 4px;
    background: linear-gradient(#e0ebf9, #c9dcf3);
    overflow: hidden;
}
.group-clipboard { width: 202px; }
.group-font { width: 351px; }
.group-para { width: 280px; }
.group-styles { width: 873px; }
.group-edit { width: 98px; }
.group-body {
    flex: 1;
    min-height: 0;
}
.group-label {
    height: 23px;
    flex: none;
    position: relative;
    text-align: center;
    line-height: 22px;
    font-size: 14.5px;
    color: #4c74ad;
    background: #bed6f1;
    padding-right: 22px;
}
.label-edit {
    padding: 0 0 0 4px;
}
.launcher {
    position: absolute;
    right: 6px;
    top: 6px;
}
.drop {
    font-size: 10px;
    font-style: normal;
    color: #4a5f7d;
}

/* Clipboard */
.clipboard-body {
    display: flex;
    padding-left: 11px;
}
.paste {
    width: 40px;
    display: flex;
    flex-direction: column;
    align-items: center;
    padding-top: 7px;
}
.paste-label {
    font-size: 14.5px;
    line-height: 18px;
    margin-top: 6px;
    color: #2f5c9c;
}
.clip-list {
    margin-left: 12px;
    padding-top: 1px;
    display: flex;
    flex-direction: column;
}
.clip-item {
    height: 30px;
    display: flex;
    align-items: center;
    gap: 5px;
    font-size: 14.5px;
    color: #2f5c9c;
    white-space: nowrap;
}
.is-off {
    color: #9aa9bd;
    padding-left: 2px;
}

/* Buttons shared by the font and paragraph groups */
.font-body {
    padding: 13px 0 0 5px;
}
.para-body {
    padding: 13px 0 0 5px;
}
.tool-row {
    height: 28px;
    display: flex;
    gap: 5px;
    margin-bottom: 11px;
    align-items: stretch;
}
.combo {
    background: linear-gradient(#eef4fc, #f6f9fe);
    display: flex;
    align-items: center;
    justify-content: space-between;
    padding: 0 5px 0 3px;
    font-size: 14.5px;
    color: #222;
    border-radius: 2px;
    white-space: nowrap;
}
.combo-font {
    width: 181px;
    margin-right: -3px;
}
.combo-size {
    width: 56px;
}
.btn-group {
    display: flex;
    border: 1px solid #a8c2e2;
    border-radius: 3px;
    background: linear-gradient(#eef4fb, #cddff4);
    overflow: hidden;
}
.format-group {
    width: 246px;
}
.color-group {
    width: 89px;
}
.btn {
    display: flex;
    align-items: center;
    justify-content: center;
    gap: 1px;
    border-right: 1px solid #d3e1f3;
    color: #222;
    flex: none;
}
.btn:last-child {
    border-right: 0;
}
.split {
    justify-content: space-between;
    padding: 0 4px 0 3px;
}
.is-on {
    background: linear-gradient(#fde3a0, #f9b04e);
}
.w-28 { width: 28px; }
.w-29 { width: 29px; }
.w-30 { width: 30px; }
.w-31 { width: 31px; }
.w-32 { width: 32px; }
.w-33 { width: 33px; }
.w-40 { width: 40px; }
.w-42 { width: 42px; }
.w-44 { width: 44px; }
.w-45 { width: 45px; }
.w-46 { width: 46px; }
.w-47 { width: 47px; }
.glyph-a-big,
.glyph-a-small,
.glyph-b,
.glyph-i,
.glyph-s,
.glyph-aa,
.pilcrow {
    font-family: "Liberation Serif", serif;
}
.glyph-a-big {
    font-size: 20px;
    font-weight: 700;
}
.glyph-a-small {
    font-size: 15px;
    font-weight: 700;
}
.glyph-a-big sup,
.glyph-a-small sup {
    font-size: 9px;
    color: #4a5f7d;
    margin-top: -10px;
}
.glyph-b {
    font-size: 17px;
    font-weight: 700;
}
.glyph-i {
    font-size: 17px;
    font-style: italic;
}
.glyph-u {
    font-size: 15px;
    font-weight: 700;
    font-family: "Liberation Sans", sans-serif;
}
.drop-gap {
    margin-left: 12px;
}
.glyph-s {
    font-size: 15px;
}
.glyph-x {
    font-size: 16px;
    font-weight: 700;
    font-family: "Liberation Sans", sans-serif;
}
.glyph-x sub,
.glyph-x sup {
    font-size: 8px;
    font-weight: 400;
}
.glyph-aa {
    font-size: 18px;
}
.clear-aa {
    font: 700 7px "Liberation Sans", sans-serif;
    fill: #2f5c9c;
}
.mark-ab {
    font: 11px "Liberation Sans", sans-serif;
    fill: #222;
    text-decoration: underline;
}
.font-color-a {
    font: 700 19px/17px "Liberation Sans", sans-serif;
    color: #1f3f8c;
    border-bottom: 5px solid #ff0000;
    margin-left: 3px;
    padding: 0 2px;
}
.mini-num {
    font: 6px "Liberation Sans", sans-serif;
    fill: #2f5c9c;
}
.sort-btn {
    width: 31px;
}
.sort-az {
    display: flex;
    flex-direction: column;
    font: 700 11px/11px "Liberation Sans", sans-serif;
}
.sort-a { color: #2f5c9c; }
.sort-z { color: #a33; }
.pilcrow {
    font-size: 24px;
    font-weight: 700;
}

/* Styles gallery */
.styles-body {
    display: flex;
    padding: 7px 0 0 7px;
}
.gallery {
    width: 777px;
    height: 76px;
    display: flex;
    gap: 11px;
    align-items: center;
}
.style-tile {
    width: 86px;
    height: 64px;
    flex: none;
    background: #fff;
    display: flex;
    flex-direction: column;
    overflow: hidden;
}
.tile-selected {
    width: 96px;
    height: 75px;
    margin-right: -5px;
    border: 4px solid #f5c565;
    box-shadow: inset 0 0 0 1px #fff;
}
.sample {
    height: 43px;
    text-align: center;
    font: 17px/40px Lato, "Liberation Sans", sans-serif;
    color: #111;
    white-space: nowrap;
    overflow: hidden;
}
.tile-selected .sample {
    height: 44px;
    line-height: 42px;
}
.sample-h1 {
    font: 700 22px/40px "Liberation Serif", serif;
    color: #365f91;
}
.sample-h2 {
    font: 700 20px/40px "Liberation Serif", serif;
    color: #4f81bd;
}
.sample-title {
    font: 46px/36px "Liberation Serif", serif;
    color: #17365d;
}
.sample-sub {
    font: italic 18px/40px "Liberation Serif", serif;
    color: #4f81bd;
    letter-spacing: 1.5px;
}
.sample-subtle {
    font: italic 17px/40px Lato, sans-serif;
    color: #808080;
}
.sample-em {
    font: italic 17px/40px Lato, sans-serif;
    color: #111;
}
.tile-name {
    text-align: center;
    font-size: 14.5px;
    line-height: 20px;
    color: #2b3f86;
    white-space: nowrap;
}
.gallery-scroll {
    width: 19px;
    height: 78px;
    display: flex;
    flex-direction: column;
    gap: 2px;
}
.gallery-arrow {
    flex: 1;
    text-align: center;
    font-size: 11px;
    line-height: 24px;
    color: #3a5f95;
    background: linear-gradient(#eaf2fc, #cfdff3);
}
.arrow-off {
    color: #b9c4d2;
}
.change-styles {
    width: 62px;
    margin-left: 5px;
    display: flex;
    flex-direction: column;
    align-items: center;
    font-size: 14.5px;
    line-height: 17px;
    color: #2f5c9c;
    white-space: nowrap;
}
.cs-pink {
    font: 700 36px "Liberation Serif", serif;
    fill: #c657b7;
}
.cs-blue {
    font: 700 44px "Liberation Serif", serif;
    fill: #5f9ad8;
    stroke: #3c6fa8;
    stroke-width: .5;
}

/* Editing */
.edit-body {
    padding: 0 0 0 9px;
}
.edit-item {
    height: 30px;
    display: flex;
    align-items: center;
    gap: 5px;
    font-size: 14.5px;
    color: #2f5c9c;
    white-space: nowrap;
}
.rep-ab {
    font: 9px "Liberation Sans", sans-serif;
    fill: #445;
}
.rep-ac {
    font: 700 10px "Liberation Sans", sans-serif;
    fill: #2e8b3a;
}

/* Work area under the ribbon */
.workspace {
    flex: 1;
    min-height: 0;
    display: flex;
    background: linear-gradient(#9cbce9, #5b8ac8);
    border-top: 6px solid #8fb0de;
}
.recovery {
    width: 265px;
    margin-left: 1px;
    flex: none;
    display: flex;
    flex-direction: column;
    background: #d4e3f6;
    border-radius: 3px 3px 0 0;
}
.recovery-head {
    height: 24px;
    padding-left: 5px;
    font-size: 14.5px;
    line-height: 23px;
    color: #3a64a0;
    background: #bdd4f1;
    flex: none;
}
.recovery-body {
    flex: 1;
    min-height: 0;
    display: flex;
    flex-direction: column;
    padding: 9px 10px 9px 10px;
}
.recovery-text {
    margin: 0;
    font-size: 13.9px;
    line-height: 17.6px;
    color: #3a6aa8;
    white-space: nowrap;
}
.recovery-sub {
    margin-top: 20px;
    height: 20px;
    font-size: 14.5px;
    font-weight: 700;
    line-height: 19px;
    color: #2d5b9a;
    border-bottom: 1px solid #7ca0d4;
    flex: none;
}
.file-list {
    height: 478px;
    flex: none;
    margin: 7px 0 0 13px;
    background: #fff;
    border: 2px solid #8d9299;
    display: flex;
}
.file-item {
    flex: 1;
    display: flex;
    gap: 12px;
    padding: 6px 0 0 14px;
    min-width: 0;
}
.file-lines {
    font-size: 14.2px;
    line-height: 20px;
    color: #222;
    white-space: nowrap;
}
.file-scroll {
    width: 21px;
    flex: none;
    background: #f1f1f1;
    display: flex;
    flex-direction: column;
    justify-content: space-between;
    align-items: center;
    padding: 13px 0 8px;
}
.recovery-help {
    margin-top: 69px;
    display: flex;
    align-items: center;
    gap: 11px;
    padding-left: 1px;
    font-size: 14px;
    color: #3333cc;
    white-space: nowrap;
}
.recovery-close {
    margin-top: 11px;
    padding-right: 1px;
    display: flex;
    justify-content: flex-end;
}
.close-btn {
    width: 55px;
    height: 30px;
    text-align: center;
    line-height: 28px;
    font-size: 14px;
    color: #222;
    background: #e8e8ea;
    border: 1px solid #a7a7a7;
}

/* Vertical ruler */
.vruler {
    width: 34px;
    flex: none;
    display: flex;
    flex-direction: column;
    align-items: center;
    background: #8fb0de;
}
.vruler-corner {
    width: 32px;
    height: 32px;
    margin: -4px 0 0 1px;
    flex: none;
    display: flex;
    align-items: center;
    justify-content: center;
    background: #bcd4f3;
    border: 1px solid #6f94cf;
}
.tab-stop {
    width: 20px;
    height: 20px;
    background: #f6f9fe;
    position: relative;
    border: 1px solid #9db5d8;
}
.tab-stop::after {
    content: "";
    position: absolute;
    left: 6px;
    top: 6px;
    width: 6px;
    height: 6px;
    border-left: 2px solid #222;
    border-bottom: 2px solid #222;
}
.vruler-strip {
    flex: none;
}
.ruler-num {
    font: 11px "Open Sans", sans-serif;
    fill: #555;
}

/* Document page */
.doc-area {
    flex: 1;
    min-width: 0;
    display: flex;
    flex-direction: column;
    align-items: center;
    padding: 4px 2px 0 0;
}
.hruler {
    flex: none;
}
.page {
    width: 1068px;
    flex: 1;
    min-height: 0;
    padding: 38px 0 0 129px;
    background: #fff;
    box-shadow: 0 0 7px rgba(30, 50, 90, 0.75);
    position: relative;
    overflow: hidden;
    font-family: Lato, "Liberation Sans", sans-serif;
    font-size: 23px;
    line-height: 30.8px;
    color: #1a1a1a;
}
.doc-heading {
    margin: 0 0 74px -129px;
    font-size: 25.5px;
    font-weight: 700;
    line-height: 31px;
    text-align: center;
    width: 1104px;
}
.doc-list {
    margin: 0;
    padding: 0;
    width: 900px;
    font-size: 23.3px;
}
.doc-list li {
    margin-bottom: 31px;
}
.doc-list li::marker {
    content: counter(list-item) ".\00a0\00a0";
}
.formula-gap {
    display: inline-block;
    width: 134px;
}
.pay-table {
    margin-top: 29px;
    display: grid;
    grid-template-columns: 322px 65px 1fr;
}
.tight {
    letter-spacing: -0.35px;
}
.squiggle {
    text-decoration: underline wavy #5aa55a 1px;
    text-underline-offset: 4px;
}

/* Screen share notice */
.share-bar {
    position: absolute;
    left: 128px;
    top: 686px;
    width: 534px;
    height: 60px;
    background: #fff;
    border: 1px solid #c9c9c9;
    display: flex;
    align-items: flex-start;
    padding-top: 6px;
    font-family: Roboto, sans-serif;
    font-size: 15.5px;
    line-height: 32px;
}
.share-grip {
    width: 7px;
    height: 24px;
    margin: 10px 14px 0;
    border-left: 2px solid #c4c4c4;
    border-right: 2px solid #c4c4c4;
    flex: none;
}
.share-text {
    width: 300px;
    margin-top: 5px;
    flex: none;
    color: #333;
    white-space: nowrap;
}
.share-stop {
    width: 136px;
    height: 44px;
    flex: none;
    background: #2a7de1;
    border-radius: 4px;
    color: #fff;
    font-weight: 500;
    text-align: center;
    line-height: 44px;
}
.share-hide {
    margin: 6px 0 0 15px;
    color: #2a7de1;
}
.share-cursor {
    position: absolute;
    left: 439px;
    top: 26px;
}

/* Vertical scrollbar */
.vscroll {
    width: 21px;
    flex: none;
    display: flex;
    flex-direction: column;
    align-items: center;
    background: #a9c6ef;
}
.scroll-split {
    width: 14px;
    height: 2px;
    margin-top: -3px;
    background: #556;
    flex: none;
}
.scroll-view {
    width: 21px;
    height: 22px;
    margin-top: 5px;
    flex: none;
    display: flex;
    align-items: center;
    justify-content: center;
    background: #d5e3f6;
    border: 1px solid #94a7c4;
}
.scroll-arrow {
    height: 20px;
    line-height: 20px;
    font-size: 14px;
    color: #33507f;
    flex: none;
}
.scroll-track {
    flex: 1;
    width: 100%;
    min-height: 0;
    padding-top: 76px;
}
.scroll-thumb {
    height: 282px;
    width: 100%;
    background: linear-gradient(90deg, #d3e3f8, #b7d0f2);
    border: 1px solid #8aa9d6;
    display: flex;
    align-items: center;
    justify-content: center;
}
.thumb-grip {
    width: 10px;
    height: 8px;
    border-top: 1px solid #667a99;
    border-bottom: 1px solid #667a99;
}
.scroll-nav {
    height: 66px;
    margin: 4px 0 -4px;
    flex: none;
    display: flex;
    flex-direction: column;
    align-items: center;
    justify-content: space-around;
}

/* Fullscreen hint */
.esc-toast {
    position: absolute;
    left: 781px;
    top: 0;
    width: 274px;
    height: 47px;
    padding-bottom: 2px;
    display: flex;
    align-items: center;
    justify-content: center;
    gap: 7px;
    background: rgba(65, 68, 72, 0.88);
    color: #fff;
    font-family: "Open Sans", sans-serif;
    font-size: 14.5px;
    z-index: 2;
}
.esc-key {
    width: 33px;
    height: 33px;
    line-height: 31px;
    text-align: center;
    border: 1px solid #fff;
    border-radius: 3px;
}

/* Meet call controls */
.callbar {
    height: 88px;
    flex: none;
    background: #fff;
    border-top: 1px solid #eceff1;
    display: grid;
    grid-template-columns: 1fr auto 1fr;
    align-items: center;
    position: relative;
    z-index: 3;
    color: #3c4043;
}
.call-left {
    display: flex;
    align-items: center;
    gap: 13px;
    padding-left: 24px;
    font-size: 18.5px;
    font-weight: 300;
}
.call-center {
    display: flex;
    gap: 16px;
}
.round {
    width: 56px;
    height: 56px;
    border-radius: 50%;
    display: flex;
    align-items: center;
    justify-content: center;
}
.round-red {
    background: #d93025;
}
.round-white {
    background: #fff;
    border: 1px solid #dadce0;
}
.call-right {
    display: flex;
    justify-content: flex-end;
    align-items: center;
    padding-right: 15px;
}
.call-action {
    display: flex;
    flex-direction: column;
    align-items: center;
    justify-content: center;
    text-align: center;
    font-size: 13.5px;
    line-height: 18px;
    color: #5f6368;
    letter-spacing: 0.2px;
}
.action-raise {
    width: 150px;
    gap: 5px;
    margin-top: -2px;
}
.action-captions {
    width: 150px;
    margin-right: 9px;
    gap: 6px;
}
.action-present {
    width: 170px;
    margin-right: 15px;
    gap: 8px;
    margin-top: -2px;
}
.call-more {
    width: 30px;
    display: flex;
    flex-direction: column;
    align-items: center;
    gap: 3px;
}
.call-more i {
    width: 4px;
    height: 4px;
    border-radius: 50%;
    background: #5f6368;
}
```
